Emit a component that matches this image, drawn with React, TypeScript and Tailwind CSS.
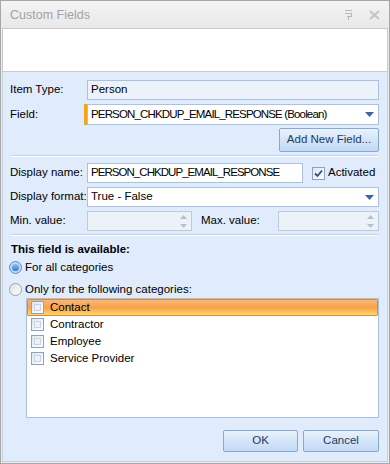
import React from 'react';

const font = { fontFamily: '"Liberation Sans", Arial, sans-serif' };

const Arrow = () => (
  <svg width="9" height="5" viewBox="0 0 9 5" className="shrink-0">
    <path d="M0 0h9L4.5 5z" fill="#3b66a6" />
  </svg>
);

const Spin = () => (
  <div className="flex flex-col items-center gap-[5px] mr-[4px]">
    <svg width="7" height="4" viewBox="0 0 7 4"><path d="M0 4h7L3.5 0z" fill="#b7c1ce" /></svg>
    <svg width="7" height="4" viewBox="0 0 7 4"><path d="M0 0h7L3.5 4z" fill="#b7c1ce" /></svg>
  </div>
);

const Check = ({ checked = false }: { checked?: boolean }) => (
  <div className="w-[13px] h-[13px] shrink-0 border border-[#8ba4c6] bg-gradient-to-br from-[#dfe6ef] to-[#ffffff] flex items-center justify-center">
    {checked ? (
      <svg width="9" height="9" viewBox="0 0 9 9">
        <path d="M1 4.5l2.5 2.5L8 1.5" stroke="#2f4f86" strokeWidth="1.8" fill="none" />
      </svg>
    ) : (
      <div className="w-[7px] h-[7px] border border-[#c9d4e3] bg-[#eef2f7]" />
    )}
  </div>
);

const Radio = ({ on = false }: { on?: boolean }) =>
  on ? (
    <div className="w-[13px] h-[13px] rounded-full shrink-0 border border-[#5b8fc9] bg-[#bcd7f3] flex items-center justify-center">
      <div className="w-[7px] h-[7px] rounded-full bg-gradient-to-b from-[#8cc0ee] to-[#2f7ad0]" />
    </div>
  ) : (
    <div className="w-[13px] h-[13px] rounded-full shrink-0 border border-[#9aa3ad] bg-gradient-to-br from-[#dde1e6] to-[#ffffff]" />
  );

const Btn = ({ children, w }: { children: React.ReactNode; w: string }) => (
  <button
    className={`${w} rounded-[2px] border border-[#84a9d6] bg-gradient-to-b from-[#eaf2fc] via-[#d4e5f8] to-[#c3daf4] text-[#1e3a66] text-[11.5px] flex items-center justify-center`}
  >
    {children}
  </button>
);

const Sep = () => <div className="ml-[8px] mr-[9px] h-[2px] border-t border-[#c2d2e8] border-b border-b-white" />;

export default function App() {
  const cats = ['Contact', 'Contractor', 'Employee', 'Service Provider'];
  return (
    <div style={font} className="w-[390px] h-[464px] bg-[#ececec] border border-[#a7a7a7] flex flex-col text-[11.5px] text-black">
      {/* title */}
      <div className="h-[27px] shrink-0 flex items-center pl-[9px] pr-[8px] bg-gradient-to-b from-[#f4f4f4] to-[#e8e8e8]">
        <span className="text-[12.5px] text-[#a3a3a3] flex-1 pt-[1px]">Custom Fields</span>
        <svg width="9" height="10" viewBox="0 0 9 10" className="mr-[16px]">
          <path d="M1 0.5h7M1 3.5h7M7.5 3.5v3M3 6.5h5M4.5 6.5v3.5" stroke="#b9b9b9" strokeWidth="1" fill="none" />
        </svg>
        <svg width="11" height="10" viewBox="0 0 11 10" className="mr-[1px]">
          <path d="M1 1l9 8M10 1l-9 8" stroke="#c4c4c4" strokeWidth="2" />
        </svg>
      </div>

      <div className="mx-[1px] h-[44px] shrink-0 bg-white border border-[#c9c9c9]" />

      {/* body */}
      <div className="flex-1 mx-[1px] mb-[1px] bg-[#e0ecfc] border-x border-b border-[#c6d1df] flex flex-col">
        <div className="flex items-center mt-[8px] pl-[7px] pr-[8px]">
          <span className="w-[77px]">Item Type:</span>
          <div className="flex-1 h-[20px] border border-[#a9c1e2] bg-[#edf2fa] flex items-center pl-[3px]">Person</div>
        </div>
        <div className="flex items-center mt-[4px] pl-[7px] pr-[8px]">
          <span className="w-[74px]">Field:</span>
          <div className="w-[3px] h-[21px] bg-[#f7a21b]" />
          <div className="flex-1 h-[21px] border border-[#a9c1e2] bg-white flex items-center pl-[3px] pr-[4px]">
            <span className="flex-1 tracking-[-0.85px]">PERSON_CHKDUP_EMAIL_RESPONSE (Boolean)</span>
            <Arrow />
          </div>
        </div>
        <div className="flex justify-end mt-[3px] pr-[8px]">
          <Btn w="w-[100px] h-[24px]">Add New Field...</Btn>
        </div>
        <div className="mt-[3px]"><Sep /></div>

        <div className="flex items-center mt-[6px] pl-[7px] pr-[8px]">
          <span className="w-[77px]">Display name:</span>
          <div className="w-[216px] h-[20px] border border-[#a9c1e2] bg-white flex items-center pl-[3px] tracking-[-0.95px]">
            PERSON_CHKDUP_EMAIL_RESPONSE
          </div>
          <div className="ml-[9px] flex items-center gap-[3px]">
            <Check checked />
            <span>Activated</span>
          </div>
        </div>
        <div className="flex items-center mt-[4px] pl-[7px] pr-[8px]">
          <span className="w-[77px]">Display format:</span>
          <div className="flex-1 h-[20px] border border-[#a9c1e2] bg-white flex items-center pl-[3px] pr-[4px]">
            <span className="flex-1">True - False</span>
            <Arrow />
          </div>
        </div>
        <div className="flex items-center mt-[4px] pl-[7px] pr-[8px]">
          <span className="w-[77px]">Min. value:</span>
          <div className="w-[105px] h-[20px] border border-[#b9cbe3] bg-[#edf2f9] flex items-center justify-end"><Spin /></div>
          <span className="ml-[9px] w-[77px]">Max. value:</span>
          <div className="flex-1 h-[20px] border border-[#b9cbe3] bg-[#edf2f9] flex items-center justify-end"><Spin /></div>
        </div>
        <div className="mt-[3px]"><Sep /></div>

        <div className="mt-[5px] pl-[8px] font-bold text-[11.5px]">This field is available:</div>
        <div className="mt-[1px] pl-[6px] flex items-center gap-[3px]">
          <Radio on />
          <span>For all categories</span>
        </div>
        <div className="mt-[4px] pl-[6px] flex items-center gap-[3px]">
          <Radio />
          <span>Only for the following categories:</span>
        </div>
        <div className="ml-[23px] mr-[8px] mt-[0px] h-[120px] border border-[#a8c0e0] bg-white flex flex-col">
          {cats.map((c, i) => (
            <div
              key={c}
              className={`h-[17px] flex items-center pl-[3px] gap-[6px] ${
                i === 0
                  ? 'bg-gradient-to-b from-[#f6b878] via-[#f9a04c] to-[#fcd86a] border border-[#dc8a36] rounded-[1px]'
                  : 'border border-transparent'
              }`}
            >
              <Check />
              <span>{c}</span>
            </div>
          ))}
        </div>

        <div className="mt-auto mb-[9px] flex justify-end gap-[5px] pr-[8px]">
          <Btn w="w-[75px] h-[22px]">OK</Btn>
          <Btn w="w-[76px] h-[22px]">Cancel</Btn>
        </div>
      </div>
    </div>
  );
}
